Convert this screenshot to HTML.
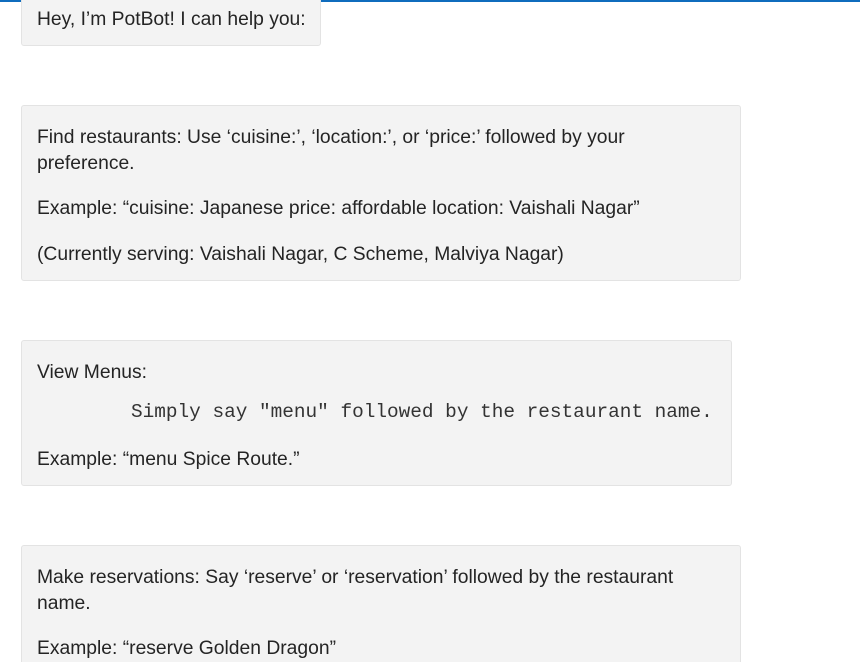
<!DOCTYPE html>
<html><head><meta charset="utf-8"><style>
html,body{margin:0;padding:0;width:860px;height:662px;overflow:hidden;background:#fff;}
body{position:relative;font-family:"Liberation Sans","DejaVu Sans",sans-serif;font-size:19.3px;color:#242424;}
.top{position:absolute;left:0;top:0;width:860px;height:2px;background:#0f6cbd;}
.b{position:absolute;background:#f3f3f3;border:1px solid #e3e3e3;border-radius:3px;box-sizing:border-box;}
.t{position:absolute;left:37px;line-height:26px;height:26px;white-space:nowrap;}
.m{font-family:"Liberation Mono",monospace;font-size:19.4px;left:131px;color:#333;}
</style></head><body>
<div class="top"></div>
<div class="b" style="left:21px;top:-10px;width:300px;height:56px"></div>
<div class="t" style="top:7px">Hey, I’m PotBot! I can help you:</div>

<div class="b" style="left:21px;top:105px;width:720px;height:176px"></div>
<div class="t" style="top:125px">Find restaurants: Use ‘cuisine:’, ‘location:’, or ‘price:’ followed by your</div>
<div class="t" style="top:151px">preference.</div>
<div class="t" style="top:196px">Example: “cuisine: Japanese price: affordable location: Vaishali Nagar”</div>
<div class="t" style="top:242px">(Currently serving: Vaishali Nagar, C Scheme, Malviya Nagar)</div>

<div class="b" style="left:21px;top:340px;width:711px;height:146px"></div>
<div class="t" style="top:360px">View Menus:</div>
<div class="t m" style="top:399px">Simply say "menu" followed by the restaurant name.</div>
<div class="t" style="top:447px">Example: “menu Spice Route.”</div>

<div class="b" style="left:21px;top:545px;width:720px;height:140px"></div>
<div class="t" style="top:565px">Make reservations: Say ‘reserve’ or ‘reservation’ followed by the restaurant</div>
<div class="t" style="top:591px">name.</div>
<div class="t" style="top:636px">Example: “reserve Golden Dragon”</div>
</body></html>
